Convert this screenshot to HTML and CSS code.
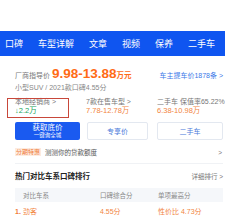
FILE: index.html
```
<!DOCTYPE html>
<html lang="zh">
<head>
<meta charset="utf-8">
<link rel="stylesheet" href="styles.css">
</head>
<body>
<div class="page">
  <div class="top"></div>
  <nav class="nav">
    <span>口碑</span><span>车型详解</span><span>文章</span><span>视频</span><span>保养</span><span>二手车</span>
  </nav>
  <section class="content">
    <div class="price-row">
      <div class="price-left">
        <span class="label">厂商指导价</span>
        <span class="price">9.98-13.88</span>
        <span class="unit">万元</span>
      </div>
      <span class="link">车主提车价1878条 &gt;</span>
    </div>
    <div class="sub">小型SUV / 2021款口碑4.55分</div>
    <div class="stats">
      <div class="stat">
        <div class="stat-label">本地经销商 &gt;</div>
        <div class="stat-val green">↓2.2万</div>
        <div class="highlight"></div>
      </div>
      <div class="stat">
        <div class="stat-label">7款在售车型 &gt;</div>
        <div class="stat-val">7.78-12.78万</div>
      </div>
      <div class="stat">
        <div class="stat-label">二手车 保值率65.22%</div>
        <div class="stat-val">6.38-10.98万</div>
      </div>
    </div>
    <div class="buttons">
      <div class="btn primary"><span class="b1">获取底价</span><span class="b2">一键询全城</span></div>
      <div class="btn ghost w61">专享价</div>
      <div class="btn ghost w66">二手车</div>
    </div>
    <div class="promo">
      <span class="tag">分期特惠</span>
      <span class="promo-text">测测你的贷款额度</span>
      <span class="chev">&gt;</span>
    </div>
    <div class="divider"></div>
    <div class="title-row">
      <span class="title">热门对比车系口碑排行</span>
      <span class="more">详细排行 &gt;</span>
    </div>
    <div class="table">
      <div class="thead">
        <span class="c1">对比车系</span><span class="c2">口碑综合分</span><span class="c3">单项最高分</span>
      </div>
      <div class="trow">
        <span class="c1"><b class="rank">1.</b>劲客</span><span class="c2">4.55分</span><span class="c3">性价比 4.73分</span>
      </div>
    </div>
  </section>
</div>
</body>
</html>
```
FILE: styles.css
```
html, body {
  margin: 0;
  padding: 0;
  background: #fff;
}
body {
  font-family: "Liberation Sans", "Noto Sans CJK SC", sans-serif;
  color: #333;
}
.page {
  width: 225px;
  height: 220px;
  overflow: hidden;
}
.top {
  height: 31px;
}
.nav {
  height: 25px;
  background: #0f55f0;
  display: flex;
  align-items: center;
  gap: 15px;
  padding-left: 5px;
  font-size: 9px;
  color: #fff;
  font-family: "Noto Sans CJK SC", sans-serif;
}
.content {
  padding: 0 2px 0 15px;
}
.price-row {
  margin-top: 10px;
  height: 16px;
  line-height: 16px;
  display: flex;
  align-items: baseline;
  justify-content: space-between;
}
.price-left {
  display: flex;
  align-items: baseline;
}
.label {
  font-size: 7px;
  color: #777;
  margin-right: 2px;
}
.price {
  font-size: 13.5px;
  font-weight: bold;
  color: #ff6b16;
}
.unit {
  font-size: 7.5px;
  font-weight: bold;
  color: #ff6b16;
}
.link {
  font-size: 7px;
  color: #3a78e8;
}
.sub {
  margin-top: 1px;
  font-size: 7px;
  line-height: 10px;
  color: #888;
}
.stats {
  margin-top: 4px;
  display: grid;
  grid-template-columns: 71px 71px 1fr;
}
.stat {
  position: relative;
  font-size: 7px;
  line-height: 9px;
  white-space: nowrap;
}
.stat-label {
  color: #777;
}
.stat-val {
  color: #f2853f;
  font-size: 7.5px;
}
.stat-val.green {
  color: #22a55a;
}
.highlight {
  position: absolute;
  left: -8px;
  top: 1px;
  width: 60px;
  height: 18px;
  border: 1.5px solid #c8473a;
}
.buttons {
  margin-top: 7px;
  display: grid;
  grid-template-columns: 72px 70px 66px;
}
.btn {
  height: 18px;
  box-sizing: border-box;
  border-radius: 2px;
  display: flex;
  flex-direction: column;
  align-items: center;
  justify-content: center;
  font-size: 7px;
}
.primary {
  width: 65px;
  background: #1a5af0;
  color: #fff;
}
.b1 {
  font-size: 7.5px;
  line-height: 9px;
}
.b2 {
  font-size: 5.5px;
  line-height: 7px;
}
.ghost {
  border: 1px solid #e3e8f0;
  color: #4a7ada;
}
.w61 { width: 61px; }
.w66 { width: 66px; }
.promo {
  margin-top: 8px;
  height: 8px;
  display: flex;
  align-items: center;
  font-size: 6.5px;
}
.tag {
  background: #fdebe0;
  color: #f07b3a;
  font-size: 6px;
  line-height: 8px;
  padding: 0 1px;
  margin-right: 4px;
}
.promo-text {
  color: #555;
  flex: 1;
}
.chev {
  color: #777;
  margin-right: 1px;
}
.divider {
  margin-top: 7px;
  height: 1px;
  background: #f0f2f5;
}
.title-row {
  margin-top: 8px;
  height: 10px;
  line-height: 10px;
  display: flex;
  justify-content: space-between;
  align-items: center;
}
.title {
  font-size: 7.5px;
  font-weight: bold;
  color: #222;
}
.more {
  font-size: 6.5px;
  color: #777;
}
.table {
  margin-top: 6px;
  font-size: 6.5px;
}
.thead, .trow {
  display: grid;
  grid-template-columns: 85px 58px 1fr;
  align-items: center;
}
.thead {
  height: 14px;
  background: #f5f7fa;
  color: #888;
}
.thead .c1 {
  padding-left: 8px;
}
.trow {
  height: 18px;
  color: #f2853f;
  font-size: 7px;
}
.rank {
  display: inline-block;
  width: 8px;
  font-weight: bold;
  color: #f07b3a;
}
```
